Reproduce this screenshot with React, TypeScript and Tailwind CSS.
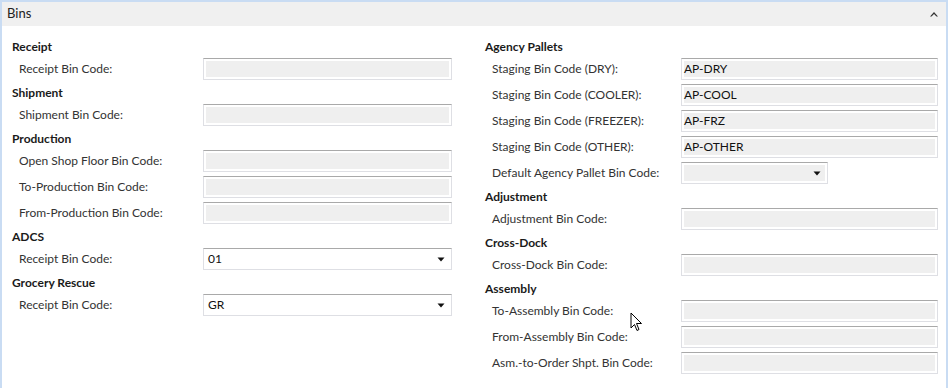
import React from "react";

type Field = { label: string; value?: string; kind?: "text" | "drop" | "dropGray"; short?: boolean };
type Section = { title: string; fields: Field[] };

const left: Section[] = [
  { title: "Receipt", fields: [{ label: "Receipt Bin Code:" }] },
  { title: "Shipment", fields: [{ label: "Shipment Bin Code:" }] },
  {
    title: "Production",
    fields: [
      { label: "Open Shop Floor Bin Code:" },
      { label: "To-Production Bin Code:" },
      { label: "From-Production Bin Code:" },
    ],
  },
  { title: "ADCS", fields: [{ label: "Receipt Bin Code:", value: "01", kind: "drop" }] },
  { title: "Grocery Rescue", fields: [{ label: "Receipt Bin Code:", value: "GR", kind: "drop" }] },
];

const right: Section[] = [
  {
    title: "Agency Pallets",
    fields: [
      { label: "Staging Bin Code (DRY):", value: "AP-DRY" },
      { label: "Staging Bin Code (COOLER):", value: "AP-COOL" },
      { label: "Staging Bin Code (FREEZER):", value: "AP-FRZ" },
      { label: "Staging Bin Code (OTHER):", value: "AP-OTHER" },
      { label: "Default Agency Pallet Bin Code:", kind: "dropGray", short: true },
    ],
  },
  { title: "Adjustment", fields: [{ label: "Adjustment Bin Code:" }] },
  { title: "Cross-Dock", fields: [{ label: "Cross-Dock Bin Code:" }] },
  {
    title: "Assembly",
    fields: [
      { label: "To-Assembly Bin Code:" },
      { label: "From-Assembly Bin Code:" },
      { label: "Asm.-to-Order Shpt. Bin Code:" },
    ],
  },
];

function Arrow() {
  return (
    <svg width="8" height="5" viewBox="0 0 8 5" className="absolute right-[6px] top-[8px]">
      <path d="M0.5 0.5 H7.5 L4 4.5 Z" fill="#111" />
    </svg>
  );
}

function Input({ f, width }: { f: Field; width: string }) {
  const kind = f.kind ?? "text";
  return (
    <div
      className={`relative h-[22px] border border-[#dedfe4] border-t-[#a9a9a9] bg-white p-[2px] ${
        f.short ? "w-[147px]" : width
      }`}
    >
      {kind === "drop" ? (
        <div className="h-full flex items-center pl-[2px] text-[12px] text-[#111]">{f.value}</div>
      ) : (
        <div className="h-full bg-[#efefef] flex items-center pl-[0px] text-[12px] text-[#111]">
          {f.value}
        </div>
      )}
      {kind !== "text" && <Arrow />}
    </div>
  );
}

function Column({ sections, labelW, inputW, className }: { sections: Section[]; labelW: string; inputW: string; className: string }) {
  return (
    <div className={className}>
      {sections.map((s) => (
        <div key={s.title}>
          <div className="mt-[2px] h-[18px] flex items-center font-bold text-[12px] text-[#1a1a1a]">{s.title}</div>
          {s.fields.map((f, i) => (
            <div key={i} className="h-[26px] flex items-center">
              <div className={`${labelW} pl-[7px] text-[12px] text-[#333]`}>{f.label}</div>
              <Input f={f} width={inputW} />
            </div>
          ))}
        </div>
      ))}
    </div>
  );
}

export default function App() {
  return (
    <div
      className="relative w-[950px] h-[388px] bg-white overflow-hidden"
      style={{ fontFamily: "Lato, 'Open Sans', sans-serif" }}
    >
      <div className="w-[948px] h-[388px] border-l-2 border-r-2 border-t-2 border-[#c9dcf3]">
        <div className="h-[24px] bg-[#f0f0f0] flex items-center justify-between pl-[5px] pr-[8px]">
          <span className="text-[13px] text-[#222]">Bins</span>
          <svg width="8" height="6" viewBox="0 0 8 6">
            <path d="M0 5.5 L4 1 L8 5.5 L6.5 5.5 L4 3 L1.5 5.5 Z" fill="#333" />
          </svg>
        </div>
        <div className="flex pt-[10px]">
          <Column sections={left} labelW="w-[191px]" inputW="w-[249px]" className="ml-[10px] w-[473px]" />
          <Column sections={right} labelW="w-[196px]" inputW="w-[257px]" className="" />
        </div>
      </div>
      <svg className="absolute left-[630px] top-[312px]" width="13" height="21" viewBox="0 0 13 21">
        <path d="M1 1 L1 16 L4.5 12.5 L7 18.5 L9 17.5 L6.5 11.5 L11.5 11.5 Z" fill="#fff" stroke="#000" strokeWidth="1" />
      </svg>
    </div>
  );
}
